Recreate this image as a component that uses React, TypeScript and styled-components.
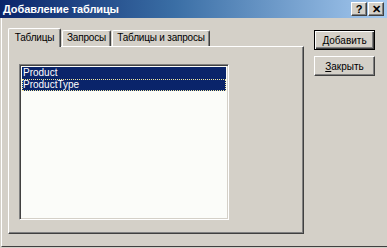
import React, { useState } from 'react';
import styled, { createGlobalStyle, css } from 'styled-components';

const GlobalStyle = createGlobalStyle`
  html, body {
    margin: 0;
    padding: 0;
    background: #d4d0c8;
  }
  * {
    box-sizing: border-box;
  }
`;

const Window = styled.div`
  width: 387px;
  height: 248px;
  background: #d4d0c8;
  display: flex;
  flex-direction: column;
  font-family: 'Liberation Sans', Arial, sans-serif;
  font-size: 10px;
  color: #000;
  overflow: hidden;
  padding-bottom: 1px;
`;

const TitleBar = styled.div`
  height: 18px;
  flex: none;
  display: flex;
  align-items: center;
  padding: 0 3px 0 3px;
  background: linear-gradient(to right, #0a246a 0%, #3a6ea5 45%, #a6caf0 100%);
`;

const Title = styled.div`
  flex: 1;
  color: #fff;
  font-weight: bold;
  font-size: 11px;
  letter-spacing: -0.1px;
  white-space: nowrap;
`;

const CaptionButton = styled.div<{ $gap?: number }>`
  background: #d4d0c8;
  border: 1px solid;
  border-color: #fff #404040 #404040 #fff;
  box-shadow: inset -1px -1px 0 #808080;
  width: 16px;
  height: 14px;
  display: flex;
  align-items: center;
  justify-content: center;
  font-weight: bold;
  font-size: 11px;
  line-height: 1;
  margin-left: ${(p) => p.$gap ?? 0}px;
`;

const Body = styled.div`
  flex: 1;
  display: flex;
  align-items: flex-start;
  margin-left: 1px;
  border-left: 1px solid #fff;
  border-bottom: 1px solid #404040;
  padding: 10px 0 0 6px;
`;

const Tabs = styled.div`
  width: 296px;
  display: flex;
  flex-direction: column;
`;

const TabRow = styled.div`
  height: 18px;
  display: flex;
  align-items: flex-end;
  position: relative;
  z-index: 1;
`;

const Tab = styled.div<{ $active?: boolean; $width: number }>`
  width: ${(p) => p.$width}px;
  height: ${(p) => (p.$active ? 19 : 16)}px;
  padding-top: ${(p) => (p.$active ? 3 : 1)}px;
  margin-bottom: ${(p) => (p.$active ? -1 : 0)}px;
  margin-left: ${(p) => (p.$active ? 0 : 1)}px;
  text-align: center;
  letter-spacing: -0.2px;
  background: #d4d0c8;
  border-top: 1px solid #fff;
  border-left: 1px solid #fff;
  border-right: 1px solid #404040;
  box-shadow: inset -1px 0 0 #808080;
  border-radius: 2px 2px 0 0;
  white-space: nowrap;
`;

const Panel = styled.div`
  height: 188px;
  border-top: 1px solid #fff;
  border-left: 1px solid #fff;
  border-right: 1px solid #404040;
  border-bottom: 1px solid #404040;
  box-shadow: inset -1px -1px 0 #808080;
  padding: 17px 0 0 10px;
`;

const ListBox = styled.div`
  width: 210px;
  height: 156px;
  background: #fbfcf9;
  border: 1px solid;
  border-color: #808080 #fff #fff #808080;
  box-shadow: inset 1px 1px 0 #404040, inset -1px -1px 0 #d4d0c8;
  padding: 2px 2px 0 2px;
`;

const Item = styled.div<{ $selected?: boolean; $focus?: boolean }>`
  height: 12px;
  line-height: 12px;
  padding-left: 1px;
  white-space: nowrap;
  color: ${(p) => (p.$selected ? '#fff' : '#000')};
  background: ${(p) => (p.$selected ? '#0a246a' : 'transparent')};
  outline: ${(p) => (p.$focus ? '1px dotted #f0e8a0' : 'none')};
  outline-offset: -1px;
`;

const ButtonColumn = styled.div`
  display: flex;
  flex-direction: column;
  gap: 6px;
  margin-left: 10px;
  padding-top: 2px;
`;

const Button = styled.div<{ $default?: boolean }>`
  width: 61px;
  height: 20px;
  display: flex;
  align-items: center;
  justify-content: center;
  background: #d4d0c8;
  ${(p) =>
    p.$default
      ? css`
          border: 1px solid #000;
          box-shadow: inset 1px 1px 0 #fff, inset -1px -1px 0 #404040, inset -2px -2px 0 #808080;
        `
      : css`
          border: 1px solid;
          border-color: #fff #404040 #404040 #fff;
          box-shadow: inset -1px -1px 0 #808080;
        `}
`;

const TABS = [
  { label: 'Таблицы', width: 53 },
  { label: 'Запросы', width: 49 },
  { label: 'Таблицы и запросы', width: 98 },
];

const ITEMS = ['Product', 'ProductType'];

export default function App() {
  const [tab] = useState(0);
  return (
    <>
      <GlobalStyle />
      <Window>
        <TitleBar>
          <Title>Добавление таблицы</Title>
          <CaptionButton>?</CaptionButton>
          <CaptionButton $gap={1}>✕</CaptionButton>
        </TitleBar>
        <Body>
          <Tabs>
            <TabRow>
              {TABS.map((t, i) => (
                <Tab key={t.label} $active={i === tab} $width={t.width}>
                  {t.label}
                </Tab>
              ))}
            </TabRow>
            <Panel>
              <ListBox>
                {ITEMS.map((name, i) => (
                  <Item key={name} $selected $focus={i === 1}>
                    {name}
                  </Item>
                ))}
              </ListBox>
            </Panel>
          </Tabs>
          <ButtonColumn>
            <Button $default>
              <span>
                <u>Д</u>обавить
              </span>
            </Button>
            <Button>
              <span>
                <u>З</u>акрыть
              </span>
            </Button>
          </ButtonColumn>
        </Body>
      </Window>
    </>
  );
}
